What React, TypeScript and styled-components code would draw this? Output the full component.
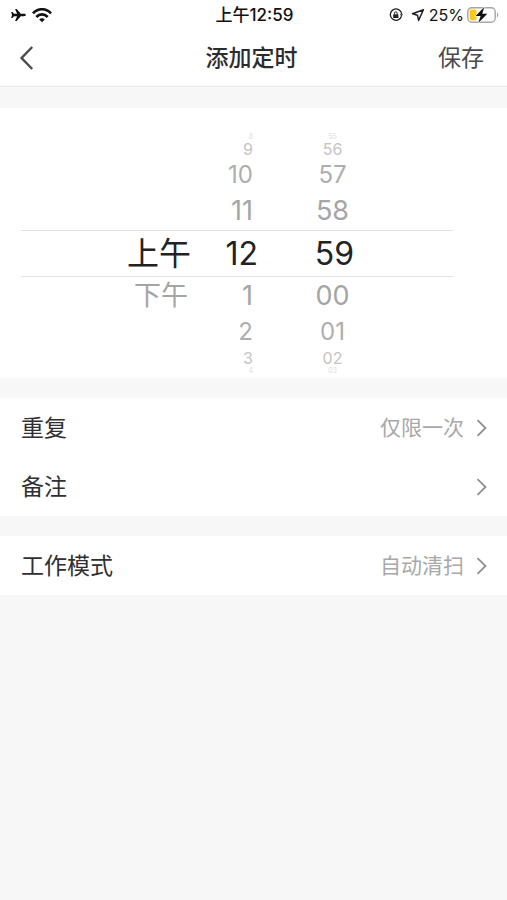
import React from "react";
import styled, { createGlobalStyle } from "styled-components";

const GlobalStyle = createGlobalStyle`
  * { box-sizing: border-box; }
  html, body { margin: 0; background: #f7f7f7; }
  body, button {
    font-family: Inter, "Noto Sans CJK SC", sans-serif;
  }
  button {
    border: 0;
    padding: 0;
    background: none;
    cursor: pointer;
  }
`;

const Page = styled.main`
  min-height: 100vh;
  background: #f7f7f7;
  color: #2c2c2e;
`;

const StatusBar = styled.div`
  display: grid;
  grid-template-columns: 1fr auto 1fr;
  align-items: center;
  height: 30px;
  padding: 0 8px 0 10px;
  background: #fff;
  color: #111;
`;

const StatusGroup = styled.div<{ $end?: boolean }>`
  display: flex;
  align-items: center;
  justify-content: ${(p) => (p.$end ? "flex-end" : "flex-start")};
  gap: ${(p) => (p.$end ? 0 : 5)}px;
`;

const Clock = styled.time`
  font-size: 17px;
  line-height: 24px;
  font-weight: 500;
`;

const BatteryLevel = styled.span`
  margin: 0 3px 0 4px;
  font-size: 16px;
  line-height: 24px;
`;

const ArrowSlot = styled.span`
  display: flex;
  margin-left: 8px;
`;

const Header = styled.header`
  display: grid;
  grid-template-columns: 1fr auto 1fr;
  align-items: center;
  height: 57px;
  padding: 0 23px 0 19px;
  background: #fff;
  border-bottom: 1px solid #e9e9e9;
`;

const Title = styled.h1`
  margin: 0;
  font-size: 23px;
  line-height: 32px;
  font-weight: 500;
`;

const BackButton = styled.button`
  display: flex;
  justify-self: start;
  color: #4a4a4c;
`;

const SaveButton = styled.button`
  justify-self: end;
  font-size: 23px;
  line-height: 32px;
  color: #4a4a4c;
`;

const Sections = styled.div`
  display: flex;
  flex-direction: column;
  gap: 20px;
  padding-top: 21px;
`;

const Panel = styled.section`
  background: #fff;
`;

const Wheels = styled.div`
  display: grid;
  grid-template-columns: 170fr 67fr 195fr;
  align-items: start;
  margin: 0 54px 0 21px;
  padding: 25px 0 4px;
`;

const Wheel = styled.div<{ $align: "center" | "flex-end" }>`
  display: flex;
  flex-direction: column;
  --align: ${(p) => p.$align};
`;

const steps = [
  { height: 47, size: 32, line: 36, color: "#222224" },
  { height: 38, size: 27, line: 34, color: "#a5a5a5" },
  { height: 34, size: 24, line: 30, color: "#aeaeae" },
  { height: 18, size: 16, line: 18, color: "#c4c4c4" },
  { height: 7, size: 7, line: 7, color: "#dcdcdc" },
];

const Option = styled.div<{ $offset: number; $trailing: number }>`
  display: flex;
  justify-content: var(--align);
  align-items: center;
  height: ${(p) => steps[Math.abs(p.$offset)].height}px;
  padding-right: ${(p) => p.$trailing}px;
  border: solid #e2e2e2;
  border-width: ${(p) => (p.$offset === 0 ? "1px 0" : "0")};
  font-size: ${(p) => steps[Math.abs(p.$offset)].size}px;
  line-height: ${(p) => steps[Math.abs(p.$offset)].line}px;
  color: ${(p) => steps[Math.abs(p.$offset)].color};
  white-space: nowrap;
`;

const Row = styled.button`
  display: flex;
  align-items: center;
  width: 100%;
  height: 59px;
  padding: 0 19px 0 21px;
  text-align: left;
`;

const RowLabel = styled.span`
  flex: 1;
  font-size: 23px;
  line-height: 32px;
  color: #303032;
`;

const RowValue = styled.span`
  margin-right: 11px;
  font-size: 21px;
  line-height: 32px;
  color: #a8a8a8;
`;

const hours = ["8", "9", "10", "11", "12", "1", "2", "3", "4"];
const minutes = ["55", "56", "57", "58", "59", "00", "01", "02", "03"];
const periods = ["", "", "", "", "上午", "下午"];

type ColumnProps = {
  label: string;
  values: string[];
  align: "center" | "flex-end";
  trailing: number;
  selectedTrailing?: number;
};

function WheelColumn({ label, values, align, trailing, selectedTrailing = 0 }: ColumnProps) {
  return (
    <Wheel role="listbox" aria-label={label} $align={align}>
      {values.map((value, i) => (
        <Option
          key={i}
          role={value ? "option" : "presentation"}
          aria-selected={value ? i === 4 : undefined}
          $offset={i - 4}
          $trailing={i === 4 ? selectedTrailing : trailing}
        >
          {value}
        </Option>
      ))}
    </Wheel>
  );
}

function Plane() {
  return (
    <svg width="17" height="16" viewBox="0 0 17 16" aria-hidden="true">
      <path
        fill="#111"
        d="M15.8 8c0-.8-.8-1.2-1.8-1.2h-3.2L6.7 1.9H5.1l2 4.9H4L2.5 5H1.2l.8 3-.8 3h1.3L4 9.2h3.1l-2 4.9h1.6l4.1-4.9H14c1 0 1.8-.4 1.8-1.2Z"
      />
    </svg>
  );
}

function Wifi() {
  return (
    <svg width="20" height="15" viewBox="0 0 20 15" fill="none" stroke="#111" strokeWidth="2.6" aria-hidden="true">
      <path d="M1 5.4C6-.2 14-.2 19 5.4" />
      <path d="M4.3 9c3.3-3.5 8.1-3.5 11.4 0" />
      <path d="M7.2 11.5c1.6-1.6 4-1.6 5.6 0L10 14.3Z" fill="#111" stroke="none" />
    </svg>
  );
}

function OrientationLock() {
  return (
    <svg width="14" height="14" viewBox="0 0 14 14" fill="none" stroke="#222" strokeWidth="1.3" aria-hidden="true">
      <path d="M12.5 8.3A5.7 5.7 0 1 1 12.7 6" />
      <path d="M10.8 6.2h3.2l-1.5 2.3Z" fill="#222" stroke="none" />
      <rect x="4.2" y="6.3" width="5.2" height="3.8" rx=".6" fill="#222" stroke="none" />
      <path d="M5.4 6.6V5.2a1.4 1.4 0 0 1 2.8 0v1.4" strokeWidth="1" />
    </svg>
  );
}

function LocationArrow() {
  return (
    <svg width="14" height="14" viewBox="0 0 14 14" fill="none" stroke="#222" strokeWidth="1.5" strokeLinejoin="round" aria-hidden="true">
      <path d="M12.4 1.8 1.5 5.7l5 1.5 1.1 5.2Z" />
    </svg>
  );
}

function Battery() {
  return (
    <svg width="32" height="18" viewBox="0 0 32 18" aria-hidden="true">
      <rect x=".8" y="1.8" width="27.4" height="14.4" rx="4" fill="#fff" stroke="#a6a6a6" strokeWidth="1.4" />
      <path d="M30 6.6c1.6.5 1.6 4.3 0 4.8Z" fill="#a6a6a6" />
      <rect x="2.6" y="3.6" width="7" height="10.8" rx="2" fill="#fbc918" />
      <path d="M17.2 1 8.6 9.9h5L11.3 17l9-9.2h-5Z" fill="#111" stroke="#fff" strokeWidth="1.2" paintOrder="stroke" />
    </svg>
  );
}

function BackIcon() {
  return (
    <svg width="16" height="26" viewBox="0 0 16 26" fill="none" stroke="currentColor" strokeWidth="2.4" aria-hidden="true">
      <path d="M13.2 2 2.6 13l10.6 11" />
    </svg>
  );
}

function Chevron() {
  return (
    <svg width="13" height="18" viewBox="0 0 13 18" fill="none" stroke="#909090" strokeWidth="1.8" aria-hidden="true">
      <path d="m2.5 1.2 8 7.8-8 7.8" />
    </svg>
  );
}

function SettingRow({ label, value }: { label: string; value?: string }) {
  return (
    <Row type="button">
      <RowLabel>{label}</RowLabel>
      {value && <RowValue>{value}</RowValue>}
      <Chevron />
    </Row>
  );
}

export default function App() {
  return (
    <Page>
      <GlobalStyle />
      <StatusBar>
        <StatusGroup>
          <Plane />
          <Wifi />
        </StatusGroup>
        <Clock>上午12:59</Clock>
        <StatusGroup $end>
          <OrientationLock />
          <ArrowSlot>
            <LocationArrow />
          </ArrowSlot>
          <BatteryLevel>25%</BatteryLevel>
          <Battery />
        </StatusGroup>
      </StatusBar>
      <Header>
        <BackButton type="button" aria-label="返回">
          <BackIcon />
        </BackButton>
        <Title>添加定时</Title>
        <SaveButton type="button">保存</SaveButton>
      </Header>
      <Sections>
        <Panel>
          <Wheels>
            <WheelColumn label="时段" values={periods} align="flex-end" trailing={3} />
            <WheelColumn label="小时" values={hours} align="flex-end" trailing={5} />
            <WheelColumn label="分钟" values={minutes} align="center" trailing={46} selectedTrailing={42} />
          </Wheels>
        </Panel>
        <Panel>
          <SettingRow label="重复" value="仅限一次" />
          <SettingRow label="备注" />
        </Panel>
        <Panel>
          <SettingRow label="工作模式" value="自动清扫" />
        </Panel>
      </Sections>
    </Page>
  );
}
